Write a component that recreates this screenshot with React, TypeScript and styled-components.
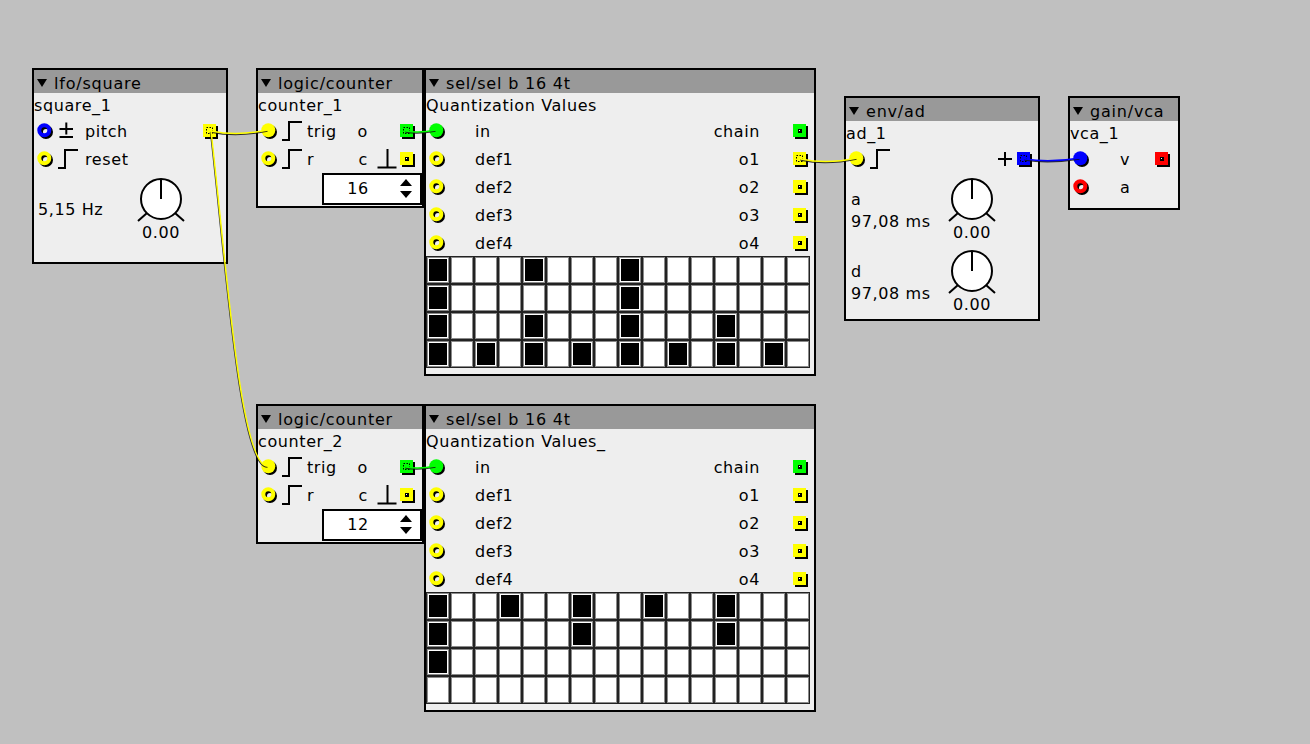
import styled, { createGlobalStyle } from 'styled-components'

const YELLOW = '#ffff00'
const GREEN = '#00ff00'
const BLUE = '#0000ff'
const RED = '#ff0000'

const GlobalStyle = createGlobalStyle`
    html, body {
        margin: 0;
        padding: 0;
        background: #c0c0c0;
    }
`

const Canvas = styled.div`
    position: relative;
    width: 1310px;
    height: 744px;
    overflow: hidden;
    background: #c0c0c0;
    font-family: "DejaVu Sans", "Noto Sans", sans-serif;
    font-size: 16px;
    letter-spacing: 0.6px;
    color: #000;
`

// one patch object, placed on the free canvas
const ObjBox = styled.div<{ $x: number; $y: number; $w: number; $pb?: number }>`
    position: absolute;
    left: ${p => p.$x}px;
    top: ${p => p.$y}px;
    width: ${p => p.$w}px;
    box-sizing: border-box;
    border: 2px solid #000;
    padding-bottom: ${p => p.$pb ?? 0}px;
    background: #eeeeee;
    display: flex;
    flex-direction: column;
`

const TitleBar = styled.div`
    height: 23px;
    box-sizing: border-box;
    padding: 5px 0 0 3px;
    background: #999999;
    display: flex;
    align-items: flex-start;
    gap: 7px;
    line-height: 18px;
    letter-spacing: 0.8px;
    white-space: nowrap;
    overflow: hidden;
    svg {
        margin-top: 4px;
        flex: none;
    }
`

const NameRow = styled.div`
    height: 24px;
    box-sizing: border-box;
    padding-top: 2px;
    line-height: 22px;
    white-space: nowrap;
`

const PortRow = styled.div<{ $pr?: number }>`
    height: 28px;
    display: flex;
    align-items: center;
    padding: 0 ${p => p.$pr ?? 7}px 0 3px;
    white-space: nowrap;
`

const Label = styled.span<{ $ml?: number; $mr?: number }>`
    margin-left: ${p => p.$ml ?? 0}px;
    margin-right: ${p => p.$mr ?? 0}px;
`

const Grow = styled.div`
    flex: 1;
`

const Glyph = styled.svg<{ $ml?: number; $mr?: number }>`
    display: block;
    flex: none;
    margin-left: ${p => p.$ml ?? 0}px;
    margin-right: ${p => p.$mr ?? 0}px;
`

const SpinRow = styled.div`
    display: flex;
    justify-content: flex-end;
    margin-bottom: 1px;
`

const Spinner = styled.div`
    width: 100px;
    height: 32px;
    box-sizing: border-box;
    border: 2px solid #000;
    background: #fff;
    display: flex;
    align-items: center;
    padding-right: 8px;
`

const SpinValue = styled.span`
    flex: 1;
    text-align: center;
    line-height: 28px;
`

const ParamSection = styled.div<{ $h: number }>`
    height: ${p => p.$h}px;
    display: flex;
`

const ParamLabel = styled.div<{ $w: number; $pl: number; $pt: number }>`
    width: ${p => p.$w}px;
    box-sizing: border-box;
    padding: ${p => p.$pt}px 0 0 ${p => p.$pl}px;
    line-height: 22px;
    white-space: nowrap;
`

const KnobCol = styled.div`
    width: 50px;
    padding-top: 3px;
    display: flex;
    flex-direction: column;
    align-items: center;
`

const KnobValue = styled.div`
    line-height: 18px;
    white-space: nowrap;
`

const Grid = styled.div`
    display: grid;
    grid-template-columns: repeat(16, 24px);
    grid-auto-rows: 28px;
    margin-top: -1px;
    margin-bottom: 6px;
`

const Cell = styled.div<{ $on: boolean }>`
    box-sizing: border-box;
    border: 1px solid #222;
    box-shadow: inset 0 0 0 1px #8a8a8a;
    background: #fff;
    padding: 2px;
    &::after {
        content: '';
        display: block;
        width: 100%;
        height: 100%;
        background: ${p => (p.$on ? '#000' : 'transparent')};
    }
`

const WireLayer = styled.svg`
    position: absolute;
    left: 0;
    top: 0;
    pointer-events: none;
`

const Inlet = ({ color, linked }: { color: string; linked?: boolean }) => (
    <Glyph width={17} height={17} viewBox="0 0 17 17">
        {linked ? (
            <>
                <circle cx={9} cy={9} r={7} fill="#000" />
                <circle cx={7.3} cy={7.3} r={7} fill={color} />
            </>
        ) : (
            <>
                <circle cx={9} cy={9} r={5} fill="none" stroke="#000" strokeWidth={4} />
                <circle cx={7.3} cy={7.3} r={5} fill="none" stroke={color} strokeWidth={4} />
            </>
        )}
    </Glyph>
)

const Outlet = ({ color, linked, ml }: { color: string; linked?: boolean; ml?: number }) => (
    <Glyph width={15} height={15} viewBox="0 0 15 15" $ml={ml}>
        <rect x={2} y={2} width={13} height={13} fill="#000" />
        <rect x={0} y={0} width={13} height={13} fill={color} />
        {linked ? (
            <rect x={3.5} y={3.5} width={6} height={6} fill="none" stroke="#000" strokeWidth={1} strokeDasharray="1.5 1.5" />
        ) : (
            <>
                <rect x={5} y={5} width={4} height={4} fill="#000" />
                <rect x={6} y={6} width={1} height={1} fill="#fff" />
            </>
        )}
    </Glyph>
)

const Triangle = () => (
    <svg width={10} height={8} viewBox="0 0 10 8">
        <polygon points="0,0 10,0 5,8" fill="#000" />
    </svg>
)

const Step = ({ ml }: { ml?: number }) => (
    <Glyph width={20} height={20} viewBox="0 0 20 20" $ml={ml}>
        <path d="M0 19 H7 V1 H20" fill="none" stroke="#000" strokeWidth={2} />
    </Glyph>
)

const PlusMinus = ({ ml }: { ml?: number }) => (
    <Glyph width={20} height={20} viewBox="0 0 20 20" $ml={ml}>
        <path d="M1.5 8 H15 M8.3 1.5 V13.5 M1.5 16 H15" fill="none" stroke="#000" strokeWidth={2} />
    </Glyph>
)

const Ground = ({ show }: { show?: boolean }) => (
    <Glyph width={22} height={20} viewBox="0 0 22 20" $ml={8} $mr={2}>
        {show && <path d="M1.5 18.5 H20.5 M11.5 0 V18.5" fill="none" stroke="#000" strokeWidth={2} />}
    </Glyph>
)

const Plus = () => (
    <Glyph width={14} height={14} viewBox="0 0 14 14">
        <path d="M0 7 H14 M7 0 V14" fill="none" stroke="#000" strokeWidth={2} />
    </Glyph>
)

const SpinArrows = () => (
    <Glyph width={12} height={20} viewBox="0 0 12 20" $ml={8}>
        <polygon points="0,7 6,0 12,7" fill="#000" />
        <polygon points="0,12 12,12 6,19" fill="#000" />
    </Glyph>
)

const Knob = () => (
    <Glyph width={50} height={48} viewBox="0 0 50 48">
        <path d="M11 37 L2 45 M39 37 L48 45" stroke="#000" strokeWidth={2} />
        <circle cx={25} cy={23} r={20} fill="#fff" stroke="#000" strokeWidth={2} />
        <path d="M25 23 V3" stroke="#000" strokeWidth={2} />
    </Glyph>
)

const Title = ({ text }: { text: string }) => (
    <TitleBar>
        <Triangle />
        <span>{text}</span>
    </TitleBar>
)

const LfoSquare = () => (
    <ObjBox $x={32} $y={68} $w={196}>
        <Title text="lfo/square" />
        <NameRow>square_1</NameRow>
        <PortRow $pr={8}>
            <Inlet color={BLUE} />
            <PlusMinus ml={4} />
            <Label $ml={7}>pitch</Label>
            <Grow />
            <Outlet color={YELLOW} linked />
        </PortRow>
        <PortRow $pr={8}>
            <Inlet color={YELLOW} />
            <Step ml={4} />
            <Label $ml={7}>reset</Label>
        </PortRow>
        <ParamSection $h={89}>
            <ParamLabel $w={102} $pl={4} $pt={26}>5,15 Hz</ParamLabel>
            <KnobCol>
                <Knob />
                <KnobValue>0.00</KnobValue>
            </KnobCol>
        </ParamSection>
    </ObjBox>
)

const Counter = ({ y, name, value }: { y: number; name: string; value: number }) => (
    <ObjBox $x={256} $y={y} $w={168}>
        <Title text="logic/counter" />
        <NameRow>{name}</NameRow>
        <PortRow>
            <Inlet color={YELLOW} linked />
            <Step ml={4} />
            <Label $ml={5}>trig</Label>
            <Grow />
            <Label>o</Label>
            <Ground />
            <Outlet color={GREEN} linked />
        </PortRow>
        <PortRow>
            <Inlet color={YELLOW} />
            <Step ml={4} />
            <Label $ml={5}>r</Label>
            <Grow />
            <Label>c</Label>
            <Ground show />
            <Outlet color={YELLOW} />
        </PortRow>
        <SpinRow>
            <Spinner>
                <SpinValue>{value}</SpinValue>
                <SpinArrows />
            </Spinner>
        </SpinRow>
    </ObjBox>
)

const Sel = ({ y, name, cells, o1 }: { y: number; name: string; cells: number[][]; o1?: boolean }) => (
    <ObjBox $x={424} $y={y} $w={392}>
        <Title text="sel/sel b 16 4t" />
        <NameRow>{name}</NameRow>
        <PortRow $pr={6}>
            <Inlet color={GREEN} linked />
            <Label $ml={29}>in</Label>
            <Grow />
            <Label>chain</Label>
            <Outlet color={GREEN} ml={33} />
        </PortRow>
        {[1, 2, 3, 4].map(n => (
            <PortRow $pr={6} key={n}>
                <Inlet color={YELLOW} />
                <Label $ml={29}>def{n}</Label>
                <Grow />
                <Label>o{n}</Label>
                <Outlet color={YELLOW} linked={n === 1 && o1} ml={33} />
            </PortRow>
        ))}
        <Grid>
            {cells.map((row, r) =>
                Array.from({ length: 16 }, (_, c) => <Cell key={`${r}-${c}`} $on={row.includes(c)} />)
            )}
        </Grid>
    </ObjBox>
)

const EnvAd = () => (
    <ObjBox $x={844} $y={96} $w={196} $pb={2}>
        <Title text="env/ad" />
        <NameRow>ad_1</NameRow>
        <PortRow $pr={6}>
            <Inlet color={YELLOW} linked />
            <Step ml={4} />
            <Grow />
            <Plus />
            <Outlet color={BLUE} linked ml={5} />
        </PortRow>
        {['a', 'd'].map(p => (
            <ParamSection $h={72} key={p}>
                <ParamLabel $w={101} $pl={5} $pt={16}>
                    {p}
                    <br />
                    97,08 ms
                </ParamLabel>
                <KnobCol>
                    <Knob />
                    <KnobValue>0.00</KnobValue>
                </KnobCol>
            </ParamSection>
        ))}
    </ObjBox>
)

const GainVca = () => (
    <ObjBox $x={1068} $y={96} $w={112} $pb={7}>
        <Title text="gain/vca" />
        <NameRow>vca_1</NameRow>
        <PortRow $pr={8}>
            <Inlet color={BLUE} linked />
            <Label $ml={30}>v</Label>
            <Grow />
            <Outlet color={RED} />
        </PortRow>
        <PortRow $pr={8}>
            <Inlet color={RED} />
            <Label $ml={30}>a</Label>
        </PortRow>
    </ObjBox>
)

const sag = (x1: number, y1: number, x2: number, y2: number, s: number) => {
    const dx = (x2 - x1) / 3
    return `M${x1} ${y1} C${x1 + dx} ${y1 + s} ${x2 - dx} ${y2 + s} ${x2} ${y2}`
}

const wires = [
    { d: sag(211, 131, 268, 130, 4), color: YELLOW },
    { d: 'M211 131 C225 250 240 470 268 466', color: YELLOW },
    { d: sag(406, 131, 436, 130, 2), color: GREEN },
    { d: sag(406, 467, 436, 466, 2), color: GREEN },
    { d: sag(801, 159, 857, 158, 4), color: YELLOW },
    { d: sag(1025, 159, 1080, 158, 3), color: BLUE },
]

const Wires = () => (
    <WireLayer width={1310} height={744} viewBox="0 0 1310 744">
        {wires.map((w, i) => (
            <g key={i} fill="none">
                <path d={w.d} stroke="#111" strokeOpacity={0.85} strokeWidth={1.5} transform="translate(-0.5 1)" />
                <path d={w.d} stroke={w.color} strokeWidth={1.5} />
            </g>
        ))}
    </WireLayer>
)

const sel1 = [
    [0, 4, 8],
    [0, 8],
    [0, 4, 8, 12],
    [0, 2, 4, 6, 8, 10, 12, 14],
]

const sel2 = [[0, 3, 6, 9, 12], [0, 6, 12], [0], []]

const App = () => {
    return (
        <>
            <GlobalStyle />
            <Canvas>
                <LfoSquare />
                <Counter y={68} name="counter_1" value={16} />
                <Sel y={68} name="Quantization Values" cells={sel1} o1 />
                <EnvAd />
                <GainVca />
                <Counter y={404} name="counter_2" value={12} />
                <Sel y={404} name="Quantization Values_" cells={sel2} />
                <Wires />
            </Canvas>
        </>
    )
}

export default App
